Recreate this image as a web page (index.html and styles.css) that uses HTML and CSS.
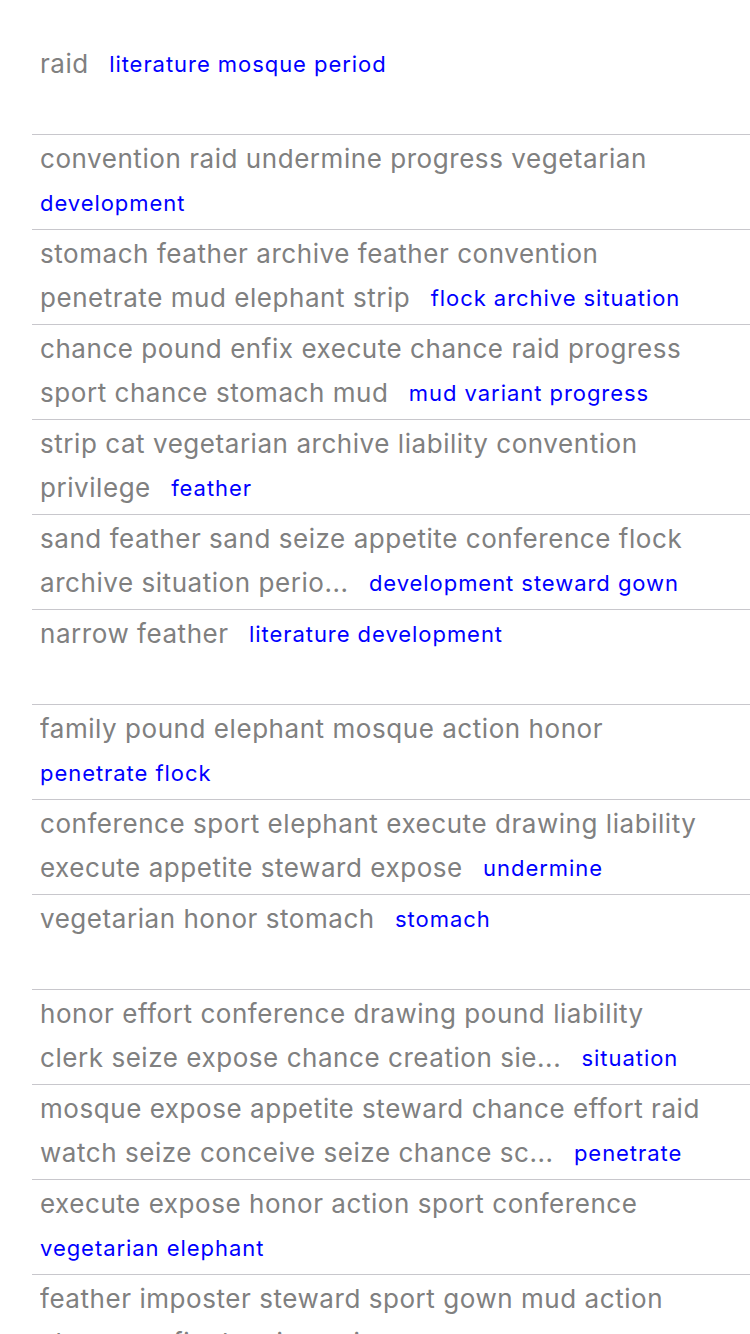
FILE: index.html
```html
<!DOCTYPE html>
<html>
<head>
<meta charset="utf-8">
<link rel="stylesheet" href="styles.css">
</head>
<body>
<ul class="list">
  <li class="row"><p class="text"><span class="main">raid</span><span class="sep"> </span><span class="tag">literature mosque period</span></p></li>
  <li class="row"><p class="text"><span class="main">convention raid undermine progress vegetarian</span><span class="sep"> </span><span class="tag">development</span></p></li>
  <li class="row"><p class="text"><span class="main">stomach feather archive feather convention penetrate mud elephant strip</span><span class="sep"> </span><span class="tag">flock archive situation</span></p></li>
  <li class="row"><p class="text"><span class="main">chance pound enfix execute chance raid progress sport chance stomach mud</span><span class="sep"> </span><span class="tag">mud variant progress</span></p></li>
  <li class="row"><p class="text"><span class="main">strip cat vegetarian archive liability convention privilege</span><span class="sep"> </span><span class="tag">feather</span></p></li>
  <li class="row"><p class="text"><span class="main">sand feather sand seize appetite conference flock archive situation perio...</span><span class="sep"> </span><span class="tag">development steward gown</span></p></li>
  <li class="row"><p class="text"><span class="main">narrow feather</span><span class="sep"> </span><span class="tag">literature development</span></p></li>
  <li class="row"><p class="text"><span class="main">family pound elephant mosque action honor</span><span class="sep"> </span><span class="tag">penetrate flock</span></p></li>
  <li class="row"><p class="text"><span class="main">conference sport elephant execute drawing liability execute appetite steward expose</span><span class="sep"> </span><span class="tag">undermine</span></p></li>
  <li class="row"><p class="text"><span class="main">vegetarian honor stomach</span><span class="sep"> </span><span class="tag">stomach</span></p></li>
  <li class="row"><p class="text"><span class="main">honor effort conference drawing pound liability clerk seize expose chance creation sie...</span><span class="sep"> </span><span class="tag">situation</span></p></li>
  <li class="row"><p class="text"><span class="main">mosque expose appetite steward chance effort raid watch seize conceive seize chance sc...</span><span class="sep"> </span><span class="tag">penetrate</span></p></li>
  <li class="row"><p class="text"><span class="main">execute expose honor action sport conference</span><span class="sep"> </span><span class="tag">vegetarian elephant</span></p></li>
  <li class="row"><p class="text"><span class="main">feather imposter steward sport gown mud action chance enfix drawing sei...</span><span class="sep"> </span><span class="tag">development steward</span></p></li>
</ul>
</body>
</html>
```
FILE: styles.css
```css
html, body {
  margin: 0;
  padding: 0;
  background: #ffffff;
}
body {
  width: 750px;
  height: 1334px;
  overflow: hidden;
  font-family: Inter, "Liberation Sans", sans-serif;
}
.list {
  list-style: none;
  margin: 0;
  padding: 40px 0 0 32px;
}
.row {
  box-sizing: border-box;
  height: 95px;
  padding: 2px 40px 0 8px;
  border-bottom: 1px solid #c8c7cc;
  overflow: hidden;
}
.text {
  margin: 0;
  font-size: 26px;
  line-height: 44px;
  max-height: 88px;
  overflow: hidden;
}
.main {
  color: #808080;
  letter-spacing: 0.55px;
}
.sep {
  letter-spacing: 13px;
}
.tag {
  font-size: 22px;
  line-height: 22px;
  color: #0000ff;
  letter-spacing: 0.95px;
  white-space: nowrap;
  vertical-align: 1px;
}
```
